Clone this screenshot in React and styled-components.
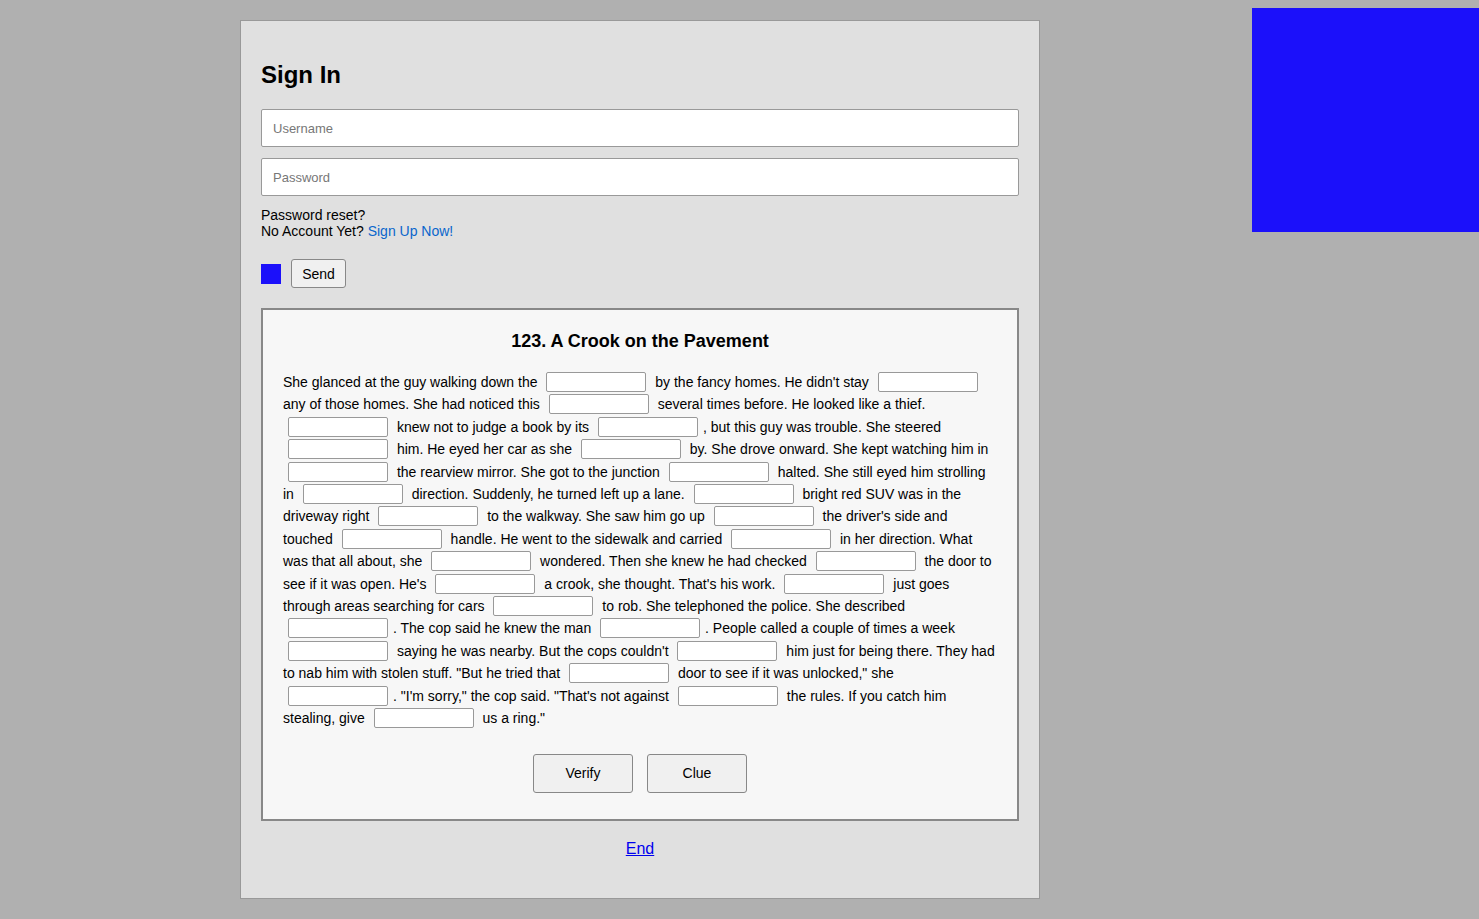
import React from "react";
import styled, { createGlobalStyle } from "styled-components";

const Global = createGlobalStyle`
  html, body { margin: 0; padding: 0; }
  body {
    background: #b0b0b0;
    font-family: "Liberation Sans", Arial, Helvetica, sans-serif;
    color: #000;
    min-height: 919px;
  }
`;

const Page = styled.div`
  padding: 20px 0 20px 240px;
`;

const Panel = styled.div`
  width: 758px;
  padding: 20px 20px 39px;
  background: #e0e0e0;
  border: 1px solid #999;
`;

const Title = styled.h2`
  margin: 20px 0 20px;
  font-size: 24px;
  font-weight: bold;
  line-height: 28px;
`;

const Fields = styled.div`
  display: flex;
  flex-direction: column;
  gap: 11px;
  margin-bottom: 11px;
`;

const Field = styled.input`
  display: block;
  box-sizing: border-box;
  width: 100%;
  height: 38px;
  margin: 0;
  padding: 0 11px;
  border: 1px solid #999;
  border-radius: 2px;
  background: #fff;
  font: 13px "Liberation Sans", Arial, sans-serif;
  &::placeholder { color: #777; }
`;

const Note = styled.div`
  font-size: 14px;
  line-height: 16px;
`;

const SignUp = styled.a`
  color: #0a66cc;
  text-decoration: none;
`;

const SendRow = styled.div`
  display: flex;
  align-items: center;
  gap: 10px;
  margin: 20px 0 20px;
`;

const Swatch = styled.span`
  width: 20px;
  height: 20px;
  background: #1b10fa;
`;

const Button = styled.button`
  box-sizing: border-box;
  width: ${(p) => p.$w}px;
  height: ${(p) => p.$h}px;
  border: 1px solid #888;
  border-radius: 3px;
  background: #f0f0f0;
  font: 14px "Liberation Sans", Arial, sans-serif;
  color: #000;
  padding: 0;
`;

const Story = styled.div`
  border: 2px solid #888;
  background: #f7f7f7;
  padding: 20px 20px 26px;
`;

const StoryTitle = styled.h3`
  margin: 0 0 19px;
  text-align: center;
  font-size: 18px;
  line-height: 22px;
  font-weight: bold;
`;

const Text = styled.p`
  margin: 0;
  font-size: 14px;
  line-height: 22.4px;
`;

const Blank = styled.input`
  box-sizing: border-box;
  width: 100px;
  height: 20px;
  margin: 1px 5px 0;
  padding: 0 4px;
  border: 1px solid #999;
  border-radius: 2px;
  background: #fff;
  vertical-align: top;
  font: 13px "Liberation Sans", Arial, sans-serif;
`;

const Actions = styled.div`
  display: flex;
  justify-content: center;
  gap: 14px;
  margin-top: 24px;
`;

const Footer = styled.div`
  text-align: center;
  margin-top: 18px;
  font-size: 16px;
  line-height: 20px;
`;

const EndLink = styled.a`
  color: #0000ee;
  text-decoration: underline;
`;

const Corner = styled.div`
  position: absolute;
  top: 8px;
  left: 1252px;
  width: 227px;
  height: 224px;
  background: #1b10fa;
`;

const parts = [
  "She glanced at the guy walking down the",
  "by the fancy homes. He didn't stay",
  "any of those homes. She had noticed this",
  "several times before. He looked like a thief.",
  "knew not to judge a book by its",
  ", but this guy was trouble. She steered",
  "him. He eyed her car as she",
  "by. She drove onward. She kept watching him in",
  "the rearview mirror. She got to the junction",
  "halted. She still eyed him strolling in",
  "direction. Suddenly, he turned left up a lane.",
  "bright red SUV was in the driveway right",
  "to the walkway. She saw him go up",
  "the driver's side and touched",
  "handle. He went to the sidewalk and carried",
  "in her direction. What was that all about, she",
  "wondered. Then she knew he had checked",
  "the door to see if it was open. He's",
  "a crook, she thought. That's his work.",
  "just goes through areas searching for cars",
  "to rob. She telephoned the police. She described",
  ". The cop said he knew the man",
  ". People called a couple of times a week",
  "saying he was nearby. But the cops couldn't",
  "him just for being there. They had to nab him with stolen stuff. \"But he tried that",
  "door to see if it was unlocked,\" she",
  ". \"I'm sorry,\" the cop said. \"That's not against",
  "the rules. If you catch him stealing, give",
  "us a ring.\"",
];

export default function App() {
  return (
    <>
      <Global />
      <Page>
        <Panel>
          <Title>Sign In</Title>
          <Fields>
            <Field placeholder="Username" />
            <Field placeholder="Password" type="password" />
          </Fields>
          <Note>Password reset?</Note>
          <Note>
            No Account Yet? <SignUp href="#">Sign Up Now!</SignUp>
          </Note>
          <SendRow>
            <Swatch />
            <Button $w={55} $h={29}>Send</Button>
          </SendRow>
          <Story>
            <StoryTitle>123. A Crook on the Pavement</StoryTitle>
            <Text>
              {parts.map((t, i) => (
                <React.Fragment key={i}>
                  {i > 0 && <Blank />}
                  {i > 0 && !t.startsWith(".") && !t.startsWith(",") ? " " : ""}
                  {t}
                  {i < parts.length - 1 ? " " : ""}
                </React.Fragment>
              ))}
            </Text>
            <Actions>
              <Button $w={100} $h={39}>Verify</Button>
              <Button $w={100} $h={39}>Clue</Button>
            </Actions>
          </Story>
          <Footer>
            <EndLink href="#">End</EndLink>
          </Footer>
        </Panel>
      </Page>
      <Corner />
    </>
  );
}
